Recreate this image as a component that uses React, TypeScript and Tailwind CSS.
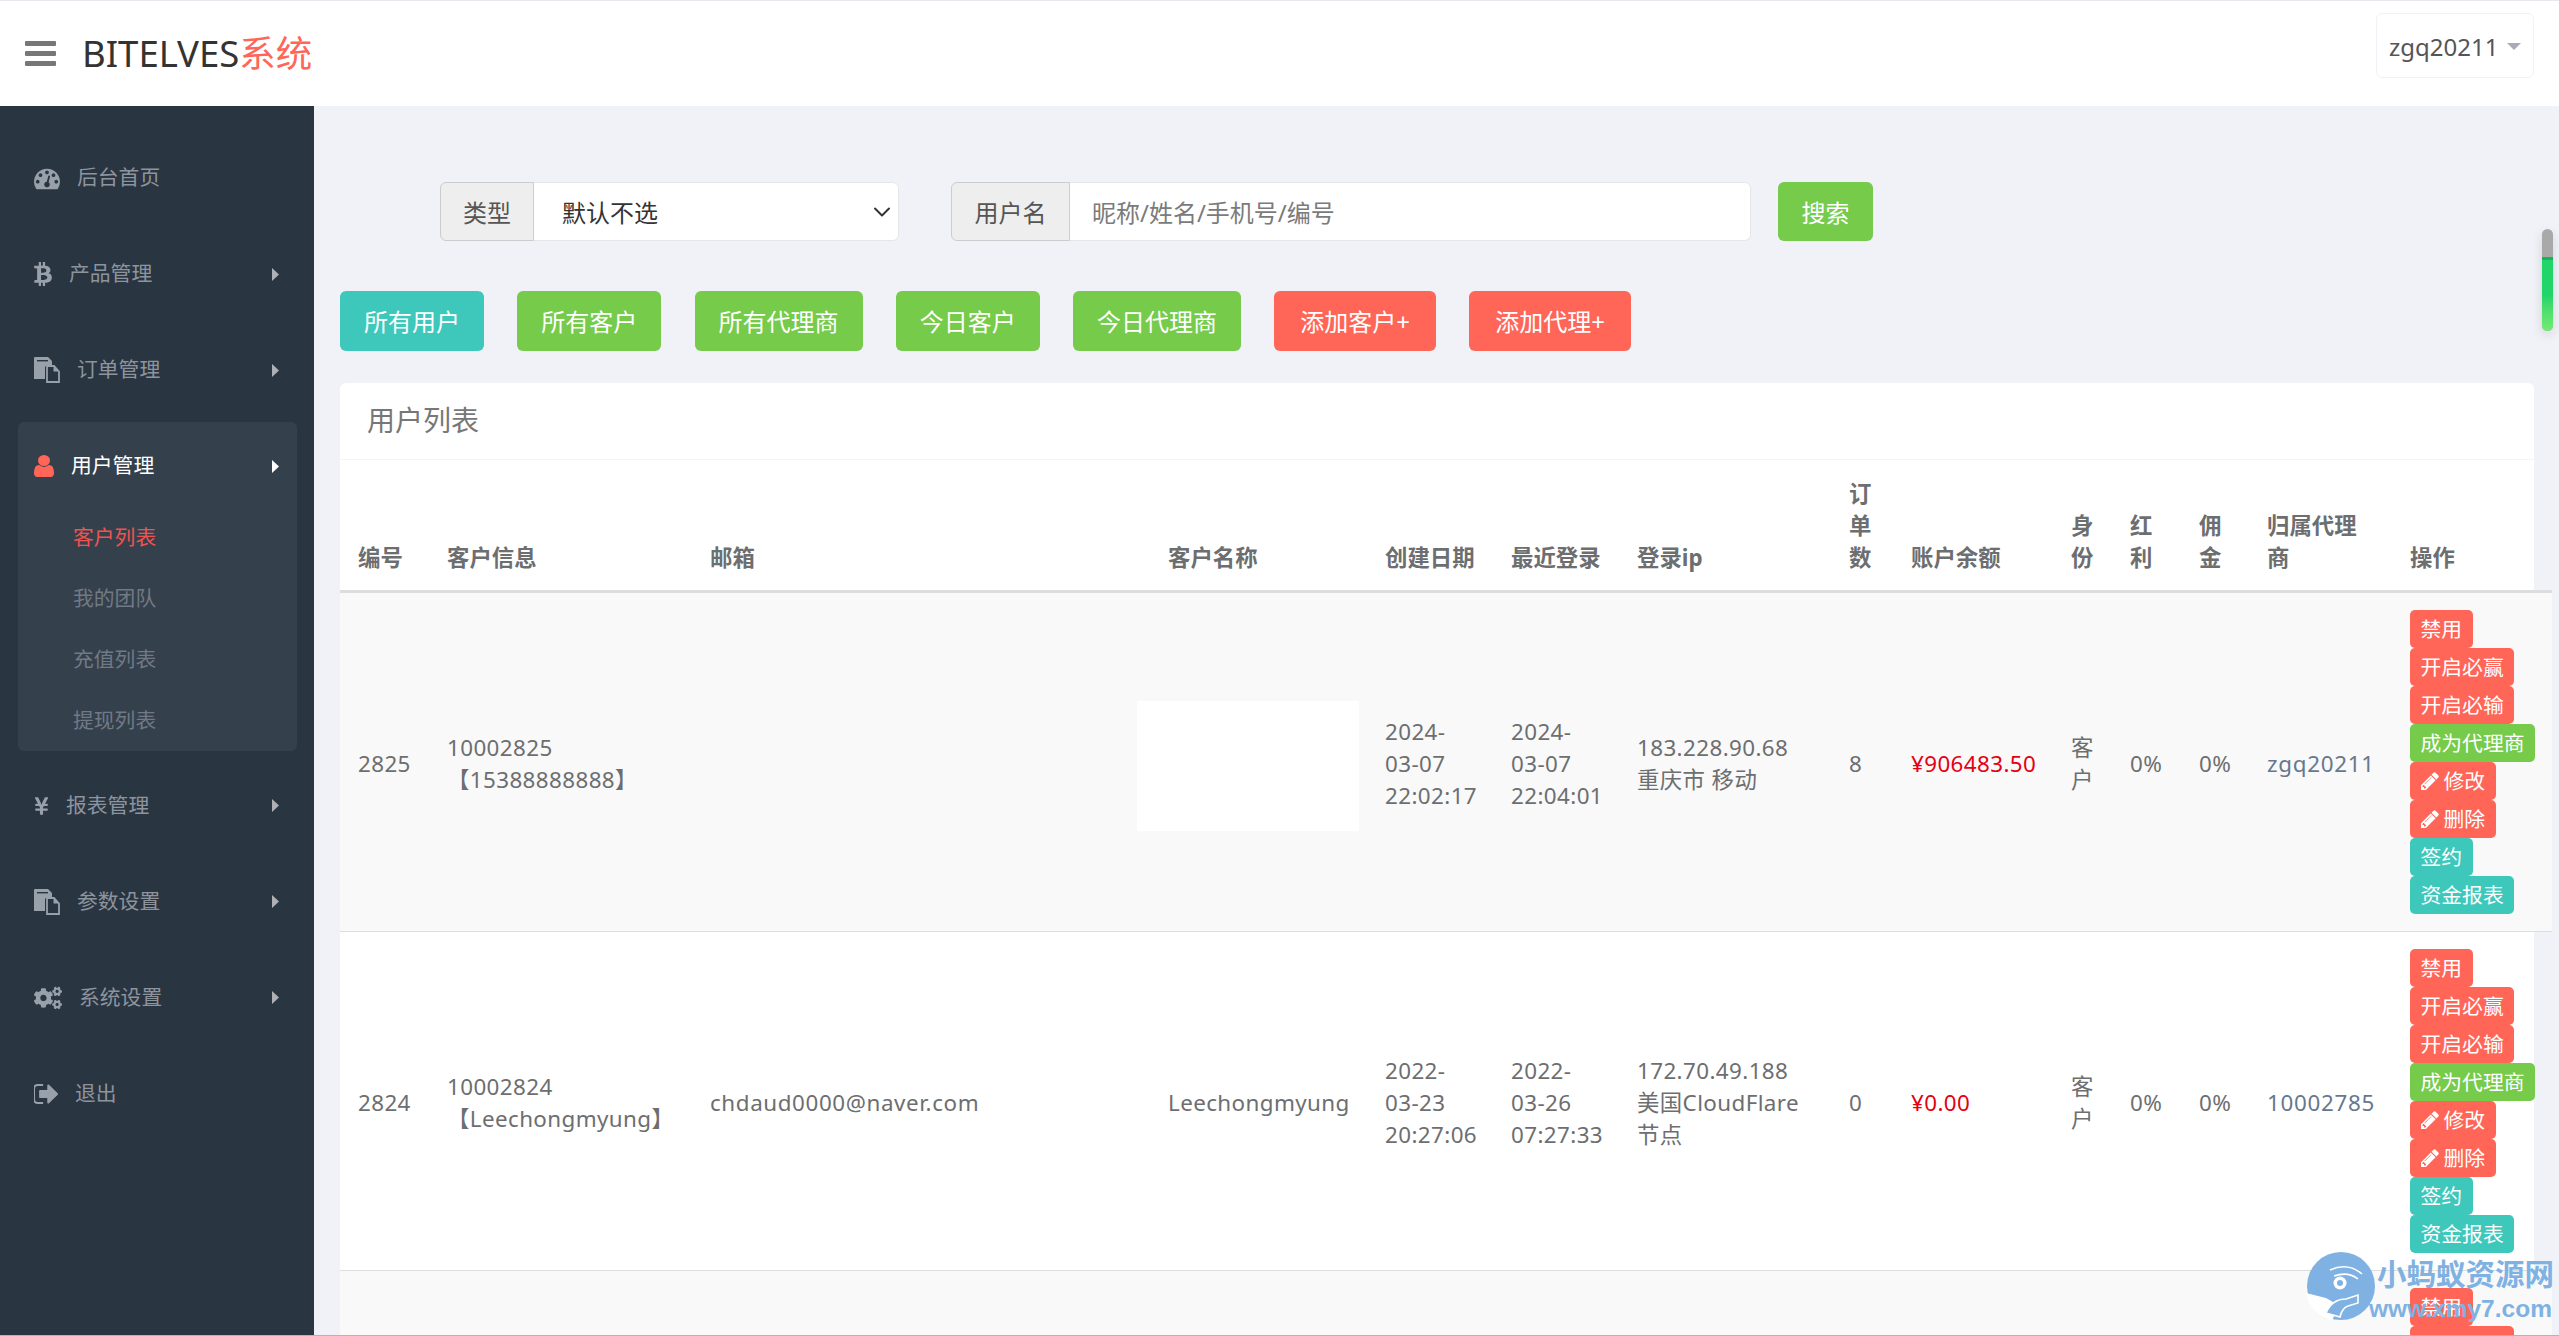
import type { ReactNode } from "react";
import { ChevronDown } from "lucide-react";
import { FaBtc, FaCogs, FaYenSign } from "react-icons/fa";

// font awesome 4 glyphs, not in the icon packages
const Gauge = ({ className }: { className: string }) => (
  <svg viewBox="0 0 1792 1792" fill="currentColor" className={className}>
    <path d="M384 1152q0-53-37.5-90.5t-90.5-37.5-90.5 37.5-37.5 90.5 37.5 90.5 90.5 37.5 90.5-37.5 37.5-90.5zm192-448q0-53-37.5-90.5t-90.5-37.5-90.5 37.5-37.5 90.5 37.5 90.5 90.5 37.5 90.5-37.5 37.5-90.5zm428 481l101-382q6-26-7.5-48.5t-38.5-29.5-48 6.5-30 39.5l-101 382q-60 5-107 43.5t-63 98.5q-20 77 20 146t117 89 146-20 89-117q16-60-6-117t-72-91zm660-33q0-53-37.5-90.5t-90.5-37.5-90.5 37.5-37.5 90.5 37.5 90.5 90.5 37.5 90.5-37.5 37.5-90.5zm-640-640q0-53-37.5-90.5t-90.5-37.5-90.5 37.5-37.5 90.5 37.5 90.5 90.5 37.5 90.5-37.5 37.5-90.5zm448 192q0-53-37.5-90.5t-90.5-37.5-90.5 37.5-37.5 90.5 37.5 90.5 90.5 37.5 90.5-37.5 37.5-90.5zm320 448q0 261-141 483-19 29-54 29h-1402q-35 0-54-29-141-221-141-483 0-182 71-348t191-286 286-191 348-71 348 71 286 191 191 286 71 348z" />
  </svg>
);

const Pages = ({ className }: { className: string }) => (
  <svg viewBox="0 0 26 26" className={className}>
    <path fill="currentColor" d="M0 1q0-1 1-1h13l4 4v4h-5l-2 2v12H0z" />
    <rect x="3" y="3" width="11" height="1.4" fill="#2a3542" />
    <path fill="none" stroke="currentColor" strokeWidth="1.8" d="M13 9h7l5 5.5V25H13z" />
    <path fill="currentColor" d="M19.5 8.5l6 6h-6z" />
  </svg>
);

const UserIcon = ({ className }: { className: string }) => (
  <svg viewBox="256 128 1280 1536" preserveAspectRatio="none" fill="currentColor" className={className}>
    <path d="M1536 1399q0 109-62.5 187t-150.5 78h-854q-88 0-150.5-78t-62.5-187q0-85 8.5-160.5t31.5-152 58.5-131 94-89 134.5-34.5q131 128 313 128t313-128q76 0 134.5 34.5t94 89 58.5 131 31.5 152 8.5 160.5zm-256-887q0 159-112.5 271.5t-271.5 112.5-271.5-112.5-112.5-271.5 112.5-271.5 271.5-112.5 271.5 112.5 112.5 271.5z" />
  </svg>
);

const SignOut = ({ className }: { className: string }) => (
  <svg viewBox="128 256 1504 1280" preserveAspectRatio="none" fill="currentColor" className={className}>
    <path d="M704 1440q0 4 1 20t.5 26.5-3 23.5-10 19.5-20.5 6.5h-320q-119 0-203.5-84.5t-84.5-203.5v-704q0-119 84.5-203.5t203.5-84.5h320q13 0 22.5 9.5t9.5 22.5q0 4 1 20t.5 26.5-3 23.5-10 19.5-20.5 6.5h-320q-66 0-113 47t-47 113v704q0 66 47 113t113 47h312l11.5 1 11.5 3 8 5.5 7 9 2 13.5zm928-544q0 26-19 45l-544 544q-19 19-45 19t-45-19-19-45v-288h-448q-26 0-45-19t-19-45v-384q0-26 19-45t45-19h448v-288q0-26 19-45t45-19 45 19l544 544q19 19 19 45z" />
  </svg>
);

const Pencil = () => (
  <svg viewBox="128 128 1536 1536" fill="currentColor" className="w-[18px] h-[18px] shrink-0">
    <path d="M491 1536l91-91-235-235-91 91v107h128v128h107zm523-928q0-22-22-22-10 0-17 7l-542 542q-7 7-7 17 0 22 22 22 10 0 17-7l542-542q7-7 7-17zm-54-192l416 416-832 832h-416v-416zm683 96q0 53-37 90l-166 166-416-416 166-165q36-38 90-38 53 0 91 38l235 234q37 39 37 91z" />
  </svg>
);

const Arrow = ({ className }: { className: string }) => (
  <svg viewBox="0 0 7 13" fill="currentColor" className={`w-[7px] h-[13px] ${className}`}>
    <path d="M0 0l7 6.5L0 13z" />
  </svg>
);

const NavItem = ({ icon, label, arrow = true }: { icon: ReactNode; label: string; arrow?: boolean }) => (
  <div className="flex items-center h-[96px] pl-[34px] pr-[35px] gap-[17px] text-[#8d949d]">
    <span className="text-[#98a0aa] flex">{icon}</span>
    <span className="text-[20.8px]">{label}</span>
    {arrow && <Arrow className="ml-auto text-[#aeb2b7]" />}
  </div>
);

const Sidebar = () => (
  <aside className="w-[314px] shrink-0 bg-[#2a3542] pt-[24px]">
    <NavItem icon={<Gauge className="w-[26px] h-[26px]" />} label="后台首页" arrow={false} />
    <NavItem icon={<FaBtc className="w-[18px] h-[26px]" />} label="产品管理" />
    <NavItem icon={<Pages className="w-[26px] h-[26px]" />} label="订单管理" />
    <div className="ml-[18px] mr-[17px] mt-[4px] mb-[6.5px] h-[329px] bg-[#35404d] rounded-[6px]">
      <div className="flex items-center h-[86px] pt-[2px] pl-[16px] pr-[18px] gap-[17px] text-white">
        <UserIcon className="w-[20px] h-[22px] text-[#ff6658]" />
        <span className="text-[20.8px]">用户管理</span>
        <Arrow className="ml-auto" />
      </div>
      <div className="-mt-[1px] pl-[55px] text-[20.8px] text-[#707984]">
        <div className="h-[61px] flex items-center text-[#ef5350]">客户列表</div>
        <div className="h-[61px] flex items-center">我的团队</div>
        <div className="h-[61px] flex items-center">充值列表</div>
        <div className="h-[61px] flex items-center">提现列表</div>
      </div>
    </div>
    <NavItem icon={<FaYenSign className="w-[15px] h-[24px]" />} label="报表管理" />
    <NavItem icon={<Pages className="w-[26px] h-[26px]" />} label="参数设置" />
    <NavItem icon={<FaCogs className="w-[28px] h-[26px]" />} label="系统设置" />
    <NavItem icon={<SignOut className="w-[24px] h-[20px]" />} label="退出" arrow={false} />
  </aside>
);

const ToolButton = ({ color, wide, children }: { color: string; wide?: boolean; children: ReactNode }) => (
  <button className={`h-[60px] pt-[2px] rounded-[6px] text-white text-[24px] ${wide ? "px-[26px]" : "px-[24px]"} ${color}`}>{children}</button>
);

const teal = "bg-[#3ec8bb]";
const green = "bg-[#76cb4b]";
const red = "bg-[#ff6658]";

const ActionTag = ({ color, pencil, children }: { color: string; pencil?: boolean; children: ReactNode }) => (
  <span className={`inline-flex items-center gap-[5px] h-[38px] px-[10.5px] rounded-[5px] text-white text-[20.8px] whitespace-nowrap shrink-0 ${color}`}>
    {pencil && <Pencil />}
    {children}
  </span>
);

const Actions = () => (
  <div className="flex flex-col items-start tracking-normal">
    <ActionTag color={red}>禁用</ActionTag>
    <ActionTag color={red}>开启必赢</ActionTag>
    <ActionTag color={red}>开启必输</ActionTag>
    <ActionTag color={green}>成为代理商</ActionTag>
    <ActionTag color={red} pencil>修改</ActionTag>
    <ActionTag color={red} pencil>删除</ActionTag>
    <ActionTag color={teal}>签约</ActionTag>
    <ActionTag color={teal}>资金报表</ActionTag>
  </div>
);

const widths = ["w-[89px]", "w-[263px]", "w-[458px]", "w-[217px]", "w-[126px]", "w-[126px]", "w-[212px]", "w-[62px]", "w-[160px]", "w-[59px]", "w-[69px]", "w-[68px]", "w-[143px]", "w-[160px]"];
const heads = ["编号", "客户信息", "邮箱", "客户名称", "创建日期", "最近登录", "登录ip", "订单数", "账户余额", "身份", "红利", "佣金", "归属代理商", "操作"];

const rows = [
  {
    id: "2825", no: "10002825", phone: "【15388888888】", email: "", created: "2024-03-07 22:02:17", last: "2024-03-07 22:04:01",
    ip: "183.228.90.68", place: "重庆市 移动", orders: "8", balance: "¥906483.50", agent: "zgq20211",
  },
  {
    id: "2824", no: "10002824", phone: "【Leechongmyung】", email: "chdaud0000@naver.com", name: "Leechongmyung", created: "2022-03-23 20:27:06", last: "2022-03-26 07:27:33",
    ip: "172.70.49.188", place: "美国CloudFlare节点", orders: "0", balance: "¥0.00", agent: "10002785",
  },
];

const cell = "px-[18px] pt-[3px]";

const UserTable = () => (
  <table className="table-fixed w-[2212px] border-collapse text-[22.4px] leading-[32px] text-[#6c6e70]">
    <colgroup>
      {widths.map((w, i) => <col key={i} className={w} />)}
    </colgroup>
    <thead>
      <tr className="border-b-[3px] border-[#dddddd]">
        {heads.map((h) => (
          <th key={h} className="px-[18px] pt-[18px] pb-[16px] text-left align-bottom font-bold">{h}</th>
        ))}
      </tr>
    </thead>
    <tbody className="tracking-[0.4px]">
      {rows.map((r, i) => (
        <tr key={r.id} className={`border-b border-[#dddddd] ${i % 2 === 0 ? "bg-[#f9f9f9]" : ""}`}>
          <td className={cell}>{r.id}</td>
          <td className={cell}>{r.no}<br />{r.phone}</td>
          <td className={`${cell} tracking-[0.6px]`}>{r.email}</td>
          <td className={cell}>
            {r.name ?? <div className="-ml-[31px] mt-[5px] w-[222px] h-[130px] bg-white" />}
          </td>
          <td className={cell}>{r.created}</td>
          <td className={cell}>{r.last}</td>
          <td className={cell}>{r.ip}<br />{r.place}</td>
          <td className={cell}>{r.orders}</td>
          <td className={`${cell} text-[#e60012]`}>{r.balance}</td>
          <td className={cell}>客户</td>
          <td className={cell}>0%</td>
          <td className={cell}>0%</td>
          <td className={`${cell} text-[#66788f] tracking-[0.7px]`}>{r.agent}</td>
          <td className="px-[18px] py-[17px]"><Actions /></td>
        </tr>
      ))}
      <tr className="bg-[#f9f9f9]">
        <td colSpan={13} />
        <td className="px-[18px] py-[17px]"><Actions /></td>
      </tr>
    </tbody>
  </table>
);

const Watermark = () => (
  <div className="absolute left-[2306px] top-[1250px] flex items-start text-[#7fb2e2] font-['Liberation_Sans',sans-serif]">
    <svg viewBox="0 0 70 70" className="w-[70px] h-[70px] shrink-0">
      <circle cx="35" cy="35" r="34" fill="#7fb2e2" />
      <path d="M0 42a34 34 0 0 0 26 27l8-14-14-8z" fill="#ffffff" />
      <path d="M24 19q18-8 32 4" stroke="#ffffff" strokeWidth="1.6" fill="none" />
      <path d="M28 25q14-5 24 3" stroke="#ffffff" strokeWidth="1.6" fill="none" />
      <circle cx="34" cy="32" r="6.5" fill="#ffffff" />
      <circle cx="34" cy="32" r="3" fill="#7fb2e2" />
      <path d="M20 62q6-14 20-14l12-4v8l-10 3q-6 2-8 11z" fill="#7fb2e2" stroke="#ffffff" strokeWidth="1.6" />
    </svg>
    <div className="ml-[1px] pt-[3px] w-[176px]">
      <div className="text-[29.5px] leading-[36px] font-bold whitespace-nowrap font-['Noto_Sans_CJK_SC',sans-serif]">小蚂蚁资源网</div>
      <div className="text-[24.5px] leading-[26px] mt-[6px] -ml-[8px] font-bold whitespace-nowrap">www.xmy7.com</div>
    </div>
  </div>
);

const App = () => (
  <div className="relative h-[1336px] overflow-hidden flex flex-col bg-[#f0f2f7] border-t border-b border-t-[#e7e9ee] border-b-[#b5b5ad] font-['Noto_Sans','Noto_Sans_CJK_SC',sans-serif]">
    <header className="h-[105px] shrink-0 bg-white flex items-center pl-[25px] pr-[25px]">
      <div className="flex flex-col gap-[4.5px] w-[31px]">
        <span className="h-[5.5px] bg-[#777777] rounded-[1px]" />
        <span className="h-[5.5px] bg-[#777777] rounded-[1px]" />
        <span className="h-[5.5px] bg-[#777777] rounded-[1px]" />
      </div>
      <div className="ml-[26px] text-[36.5px] text-[#333333]">
        BITELVES<span className="text-[#ff6658]">系统</span>
      </div>
      <div className="ml-auto mb-[16px] w-[158px] h-[65px] flex items-center pt-[2px] pl-[12px] pr-[12px] border border-[#f0f2f7] rounded-[6px] text-[24px] text-[#555555]">
        zgq20211
        <span className="ml-auto border-x-[7px] border-t-[7px] border-x-transparent border-t-[#a9abb9]" />
      </div>
    </header>

    <div className="flex flex-1 min-h-0">
      <Sidebar />
      <main className="flex-1 min-w-0 pl-[26px] pr-[25px] pt-[76px]">
        <div className="flex items-center pl-[100px]">
          <div className="flex w-[459px] h-[59px]">
            <span className="w-[94px] pt-[2px] flex items-center justify-center bg-[#eeeeee] border border-[#cccccc] rounded-l-[6px] text-[24px] text-[#555555]">类型</span>
            <div className="relative flex-1">
              <select className="w-full h-full pt-[2px] appearance-none bg-white border border-l-0 border-[#e5e6e7] rounded-r-[6px] pl-[28px] text-[24px] text-[#333333]">
                <option>默认不选</option>
              </select>
              <ChevronDown className="absolute right-[3px] top-[16px] w-[28px] h-[28px] text-[#333333] pointer-events-none" strokeWidth={1.7} />
            </div>
          </div>
          <div className="flex ml-[52px] w-[800px] h-[59px]">
            <span className="w-[119px] pt-[2px] flex items-center justify-center bg-[#eeeeee] border border-[#cccccc] rounded-l-[6px] text-[24px] text-[#555555]">用户名</span>
            <input
              placeholder="昵称/姓名/手机号/编号"
              className="flex-1 pt-[2px] bg-white border border-l-0 border-[#e5e6e7] rounded-r-[6px] pl-[22px] text-[24px] placeholder:text-[#7b7b7b]"
            />
          </div>
          <button className={`ml-[27px] w-[95px] h-[59px] pt-[2px] rounded-[6px] text-white text-[24px] ${green}`}>搜索</button>
        </div>

        <div className="flex gap-[33.25px] mt-[50px]">
          <ToolButton color={teal}>所有用户</ToolButton>
          <ToolButton color={green}>所有客户</ToolButton>
          <ToolButton color={green}>所有代理商</ToolButton>
          <ToolButton color={green}>今日客户</ToolButton>
          <ToolButton color={green}>今日代理商</ToolButton>
          <ToolButton color={red} wide>添加客户+</ToolButton>
          <ToolButton color={red} wide>添加代理+</ToolButton>
        </div>

        <section className="mt-[32px] bg-white rounded-t-[6px] h-[960px]">
          <div className="h-[77px] flex items-center pb-[2px] pl-[27px] border-b border-[#f4f4f4] text-[28px] text-[#777777]">用户列表</div>
          <UserTable />
        </section>
      </main>
    </div>

    {/* scroll widget at the right edge */}
    <div className="absolute left-[2542px] top-[228px] w-[11px] h-[102px] rounded-full overflow-hidden bg-[#a9a9a9] shadow-[0_4px_12px_rgba(0,0,0,0.12)] flex flex-col justify-end">
      <div className="h-[74px] border-t-[3px] border-[#17b455] bg-gradient-to-b from-[#22d56a] via-[#22d56a] to-[#72ec73]" />
    </div>
    <Watermark />
  </div>
);

export default App;
